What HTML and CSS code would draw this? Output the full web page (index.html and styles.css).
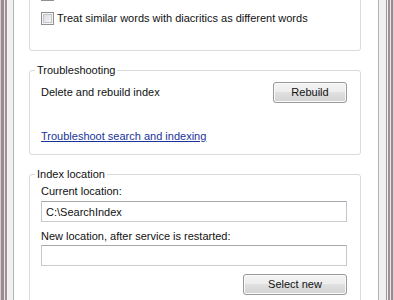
FILE: index.html
```html
<!DOCTYPE html>
<html lang="en">
<head>
    <meta charset="UTF-8">
    <title>Indexing Options - Index Settings</title>
    <link rel="stylesheet" href="styles.css">
</head>
<body>
    <div class="window">
        <div class="edge edge-left"></div>
        <div class="dialog">
            <div class="page">
                <fieldset class="group group-files">
                    <legend>File Settings</legend>
                    <label class="option"><input type="checkbox" class="check">Index encrypted files</label>
                    <label class="option"><input type="checkbox" class="check">Treat similar words with diacritics as different words</label>
                </fieldset>

                <fieldset class="group">
                    <legend>Troubleshooting</legend>
                    <div class="row">
                        <span>Delete and rebuild index</span>
                        <button class="btn btn-rebuild" type="button">Rebuild</button>
                    </div>
                    <a class="link" href="#">Troubleshoot search and indexing</a>
                </fieldset>

                <fieldset class="group group-location">
                    <legend>Index location</legend>
                    <div class="label">Current location:</div>
                    <input class="field" type="text" value="C:\SearchIndex" readonly>
                    <div class="label label-new">New location, after service is restarted:</div>
                    <input class="field field-new" type="text" readonly>
                    <div class="actions">
                        <button class="btn btn-select" type="button">Select new</button>
                    </div>
                </fieldset>
            </div>
        </div>
        <div class="edge edge-right"></div>
    </div>
</body>
</html>
```

FILE: styles.css
```css
html,
body {
    margin: 0;
    height: 100%;
    overflow: hidden;
}

body {
    font-family: "Liberation Sans", Arial, sans-serif;
    font-size: 11px;
    line-height: 15px;
    color: #111;
    background-color: #f0f0f0;
}

.window {
    display: flex;
    height: 420px;
    margin-top: -60px;
}

.edge {
    flex: none;
    width: 8px;
}

.edge-left {
    background: linear-gradient(to right, #d8cfd2 0 1px, #9b8a8f 1px 4px, #ece6e8 4px 5px, #a08f94 5px 7px, #f7f7f7 7px 8px);
}

.edge-right {
    background: linear-gradient(to right, #9a9a9a 0 1px, #f2eff0 1px 2px, #a08f94 2px 4px, #ece6e8 4px 5px, #9b8a8f 5px 7px, #d8cfd2 7px 8px);
}

.dialog {
    flex: 1;
    padding: 0 7px 0 5px;
    background-color: #f0f0f0;
}

.page {
    box-sizing: border-box;
    height: 100%;
    padding-top: 27px;
    border: 1px solid #b1b3b7;
    background-color: #fff;
}

.group {
    min-inline-size: 0;
    margin: 12px 17px 0 15px;
    padding: 4px 13px 10px 11px;
    border: 1px solid #d8dcdf;
    border-radius: 3px;
}

.group-files {
    margin-top: 0;
    padding-bottom: 24px;
}

.group-location {
    padding-top: 2px;
}

legend {
    margin-left: -6px;
    padding: 0 2px;
}

.option {
    display: flex;
    align-items: center;
    height: 15px;
}

.option + .option {
    margin-top: 9px;
}

.check {
    appearance: none;
    box-sizing: border-box;
    width: 13px;
    height: 13px;
    margin: 0 3px 0 0;
    border: 1px solid #8f8f8f;
    background: linear-gradient(135deg, #d3d5d8, #fbfbfb);
    box-shadow: inset 0 0 0 1px #f4f4f4, inset 0 0 0 2px #c3c6cb;
}

.row {
    display: flex;
    justify-content: space-between;
    align-items: center;
}

.btn {
    height: 21px;
    padding: 0;
    font: inherit;
    color: #111;
    border: 1px solid #999;
    border-radius: 3px;
    background: linear-gradient(#f4f4f4, #ededed 50%, #e0e0e0 50%, #d3d3d3);
    box-shadow: inset 0 0 0 1px #fbfbfb;
}

.btn-rebuild {
    width: 74px;
}

.btn-select {
    width: 104px;
}

.link {
    display: block;
    margin-top: 26px;
    color: #1a3399;
    text-decoration: underline;
}

.label-new {
    margin-top: 7px;
}

.field {
    display: block;
    box-sizing: border-box;
    width: 100%;
    height: 21px;
    margin: 2px 0 0;
    padding: 0 4px;
    font: inherit;
    color: #111;
    border: 1px solid;
    border-color: #a5a8ad #c3c6cb #c9ccd1 #c3c6cb;
    outline: none;
}

.field-new {
    margin-top: 1px;
}

.actions {
    display: flex;
    justify-content: flex-end;
    margin-top: 8px;
}
```
